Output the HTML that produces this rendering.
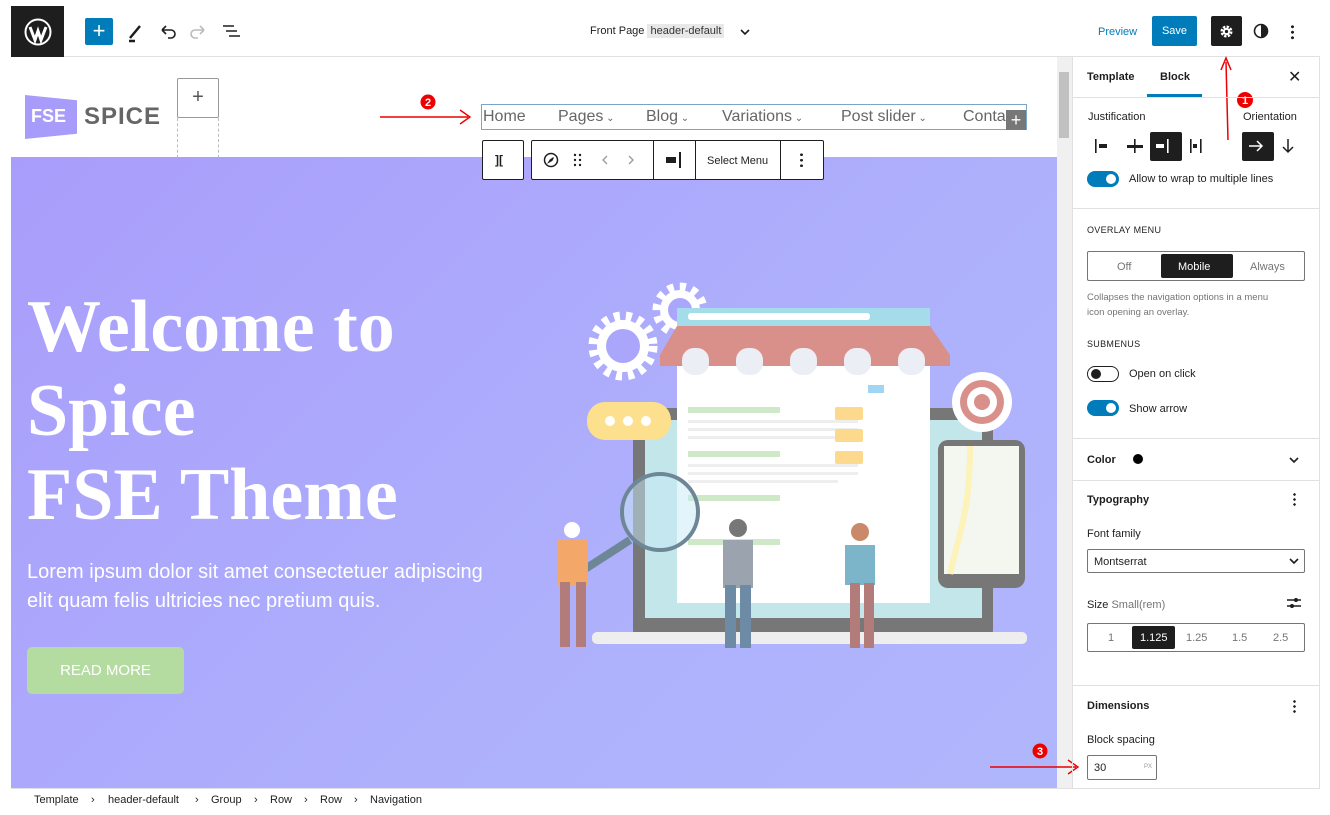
<!DOCTYPE html>
<html><head><meta charset="utf-8"><style>
*{box-sizing:border-box;margin:0;padding:0}
body{width:1330px;height:815px;background:#fff;font-family:"Liberation Sans",sans-serif;position:relative;overflow:hidden;color:#1e1e1e}
.a{position:absolute}
.t{font-size:11px}
.bx{border:1px solid #1e1e1e;border-radius:2px}
.sec{border-top:1px solid #e0e0e0;left:1073px;width:247px}
.lbl{font-size:11px;color:#1e1e1e}
.sm{font-size:9px;color:#1e1e1e;letter-spacing:.3px}
.tog{width:32px;height:16px;border-radius:8px;background:#007cba}
.tog:after{content:"";position:absolute;right:3px;top:3px;width:10px;height:10px;border-radius:5px;background:#fff}
.togo{width:32px;height:16px;border-radius:8px;border:1px solid #1e1e1e;background:#fff}
.togo:after{content:"";position:absolute;left:3px;top:2px;width:10px;height:10px;border-radius:5px;background:#1e1e1e}
.nv{position:absolute;top:3px;font-size:16px;color:#666;white-space:nowrap}
.nv small{font-size:10px}
.bc{position:absolute;top:794px;font-size:11px;color:#1e1e1e}
</style></head><body>
<!-- top bar -->
<div class="a" style="left:11px;top:6px;width:1309px;height:51px;border-bottom:1px solid #e0e0e0"></div>
<div class="a" style="left:11px;top:6px;width:53px;height:51px;background:#1e1e1e"></div>
<svg class="a" style="left:24px;top:18px" width="28" height="28" viewBox="0 0 28 28"><circle cx="14" cy="14" r="12.5" fill="none" stroke="#fff" stroke-width="2"/><path d="M6 9 L11 22 L14 13 L17 22 L22 9" fill="none" stroke="#fff" stroke-width="3"/></svg>
<div class="a" style="left:85px;top:18px;width:28px;height:27px;background:#007cba;border-radius:2px;color:#fff;font-size:22px;text-align:center;line-height:26px">+</div>
<svg class="a" style="left:126px;top:20px" width="120" height="24" viewBox="0 0 120 24"><path d="M4 18 L14 6 M3 21 H9" stroke="#1e1e1e" stroke-width="2.5"/><path d="M36 10 H45 a4 4 0 0 1 0 8 H42 M36 10 l4 -4 M36 10 l4 4" stroke="#1e1e1e" stroke-width="1.6" fill="none"/><path d="M78 10 H69 a4 4 0 0 0 0 8 H72 M78 10 l-4 -4 M78 10 l-4 4" stroke="#bbb" stroke-width="1.6" fill="none"/><path d="M97 6 H108 M100 11 H111 M103 16 H114" stroke="#1e1e1e" stroke-width="1.6"/></svg>
<div class="a t" style="left:590px;top:25px">Front Page <span style="background:#e8e8e8;padding:1px 3px;color:#333">header-default</span></div>
<svg class="a" style="left:739px;top:27px" width="12" height="10"><path d="M2 3 L6 7 L10 3" stroke="#1e1e1e" stroke-width="1.6" fill="none"/></svg>
<div class="a t" style="left:1098px;top:26px;color:#007cba">Preview</div>
<div class="a" style="left:1152px;top:16px;width:45px;height:30px;background:#007cba;border-radius:2px;color:#fff;font-size:11px;text-align:center;line-height:30px">Save</div>
<div class="a" style="left:1211px;top:16px;width:31px;height:30px;background:#1e1e1e;border-radius:2px"></div>
<svg class="a" style="left:1218px;top:23px" width="17" height="17" viewBox="0 0 24 24"><circle cx="12" cy="12" r="6" fill="none" stroke="#fff" stroke-width="5" stroke-dasharray="3 1.7"/><circle cx="12" cy="12" r="5" fill="#fff"/><circle cx="12" cy="12" r="2.3" fill="#1e1e1e"/></svg>
<svg class="a" style="left:1253px;top:23px" width="16" height="16"><circle cx="8" cy="8" r="6.5" fill="none" stroke="#1e1e1e" stroke-width="1.6"/><path d="M8 1.5 A6.5 6.5 0 0 1 8 14.5Z" fill="#1e1e1e"/></svg>
<div class="a" style="left:1291px;top:24px;width:3px;height:16px;background:radial-gradient(circle,#1e1e1e 1.4px,transparent 1.6px) 0 0/3px 5.5px"></div>
<svg class="a" style="left:1218px;top:50px" width="40" height="110"><path d="M10 90 L8 12 M3 20 L8 8 L13 20" stroke="#e00" stroke-width="1.5" fill="none"/><circle cx="27" cy="50" r="8" fill="#e00"/><text x="27" y="54" fill="#fff" font-size="11" font-weight="bold" text-anchor="middle" font-family="Liberation Sans">1</text></svg>

<!-- canvas header -->
<div class="a" style="left:25px;top:95px;width:52px;height:44px;background:#a89cfb;clip-path:polygon(0 0,100% 12%,100% 88%,0 100%)"></div>
<div class="a" style="left:31px;top:106px;color:#fff;font-weight:bold;font-size:18px">FSE</div>
<div class="a" style="left:84px;top:103px;color:#666;font-size:24px;letter-spacing:1px;font-weight:bold">SPICE</div>
<div class="a" style="left:177px;top:78px;width:42px;height:40px;border:1px solid #999;border-radius:2px;background:#fff;text-align:center;line-height:36px;font-size:20px;color:#555">+</div>
<div class="a" style="left:177px;top:118px;width:42px;height:40px;border:1px dashed #bbb;border-top:none"></div>
<svg class="a" style="left:380px;top:92px" width="100" height="36"><path d="M0 25 H88 M80 18 L90 25 L80 32" stroke="#e00" stroke-width="1.4" fill="none"/><circle cx="48" cy="10" r="7.5" fill="#e00"/><text x="48" y="14" fill="#fff" font-size="11" font-weight="bold" text-anchor="middle" font-family="Liberation Sans">2</text></svg>
<div class="a" style="left:481px;top:104px;width:546px;height:26px;border:1px solid #7aa5c9;overflow:hidden">
<span class="nv" style="left:1px">Home</span>
<span class="nv" style="left:76px">Pages<small> ⌄</small></span>
<span class="nv" style="left:164px">Blog<small> ⌄</small></span>
<span class="nv" style="left:240px">Variations<small> ⌄</small></span>
<span class="nv" style="left:359px">Post slider<small> ⌄</small></span>
<span class="nv" style="left:481px">Contact</span>
</div>
<div class="a" style="left:1006px;top:110px;width:20px;height:20px;background:#777;color:#fff;text-align:center;line-height:20px;font-size:18px">+</div>

<!-- hero -->
<div class="a" style="left:11px;top:157px;width:1046px;height:632px;background:linear-gradient(135deg,#a99dfb,#aeb0fc 60%,#b0b6fc)"></div>
<div class="a bx" style="left:482px;top:140px;width:42px;height:40px;background:#fff"></div>
<div class="a" style="left:495px;top:153px;font-size:12px;font-weight:bold">]⁠[</div>
<div class="a bx" style="left:531px;top:140px;width:293px;height:40px;background:#fff"></div>
<div class="a" style="left:653px;top:140px;width:1px;height:40px;background:#1e1e1e"></div>
<div class="a" style="left:695px;top:140px;width:1px;height:40px;background:#1e1e1e"></div>
<div class="a" style="left:780px;top:140px;width:1px;height:40px;background:#1e1e1e"></div>
<svg class="a" style="left:541px;top:151px" width="100" height="18"><circle cx="10" cy="9" r="6.5" fill="none" stroke="#1e1e1e" stroke-width="1.5"/><path d="M12.5 6.5 L9 9 L7.5 11.5 L11 9.5Z" fill="#1e1e1e" stroke="#1e1e1e"/><g fill="#1e1e1e"><circle cx="34" cy="4" r="1.2"/><circle cx="39" cy="4" r="1.2"/><circle cx="34" cy="9" r="1.2"/><circle cx="39" cy="9" r="1.2"/><circle cx="34" cy="14" r="1.2"/><circle cx="39" cy="14" r="1.2"/></g><path d="M66 5 L62 9 L66 13 M88 5 L92 9 L88 13" stroke="#999" stroke-width="1.3" fill="none"/></svg>
<div class="a" style="left:666px;top:157px;width:10px;height:6px;background:#1e1e1e"></div>
<div class="a" style="left:679px;top:152px;width:2px;height:16px;background:#1e1e1e"></div>
<div class="a" style="left:707px;top:155px;font-size:11px">Select Menu</div>
<div class="a" style="left:800px;top:152px;width:3px;height:16px;background:radial-gradient(circle,#1e1e1e 1.3px,transparent 1.5px) 0 0/3px 5.5px"></div>

<div class="a" style="left:27px;top:285px;color:#fff;font-family:'Liberation Serif',serif;font-weight:bold;font-size:74px;line-height:84px;white-space:nowrap">Welcome to<br>Spice<br>FSE Theme</div>
<div class="a" style="left:27px;top:558px;color:#fff;font-size:20px;line-height:29px;white-space:nowrap">Lorem ipsum dolor sit amet consectetuer adipiscing<br>elit quam felis ultricies nec pretium quis.</div>
<div class="a" style="left:27px;top:647px;width:157px;height:47px;background:#b5dca0;border-radius:5px;color:#fff;font-size:15px;text-align:center;line-height:47px">READ MORE</div>

<!-- illustration -->
<svg class="a" style="left:530px;top:270px" width="530" height="400" viewBox="0 0 530 400">
<g fill="#fff"><circle cx="93" cy="76" r="26"/><circle cx="150" cy="40" r="20"/></g>
<g stroke="#fff" stroke-width="9" stroke-dasharray="6 6"><circle cx="93" cy="76" r="30" fill="none"/><circle cx="150" cy="40" r="23" fill="none"/></g>
<g fill="#aaa6fb"><circle cx="93" cy="76" r="17"/><circle cx="150" cy="40" r="12"/></g>
<rect x="103" y="138" width="360" height="230" rx="8" fill="#777"/>
<rect x="115" y="150" width="337" height="198" fill="#c2e6ea"/>
<rect x="62" y="362" width="435" height="12" rx="5" fill="#eee"/>
<rect x="147" y="38" width="253" height="295" fill="#fff"/>
<rect x="147" y="38" width="253" height="18" fill="#a5dcea"/>
<rect x="158" y="43" width="182" height="7" rx="3" fill="#fff"/>
<path d="M130 85 L147 56 H400 L420 85 V96 H130Z" fill="#d9908a"/>
<g fill="#eceef6"><rect x="152" y="78" width="27" height="27" rx="12"/><rect x="206" y="78" width="27" height="27" rx="12"/><rect x="260" y="78" width="27" height="27" rx="12"/><rect x="314" y="78" width="27" height="27" rx="12"/><rect x="368" y="78" width="27" height="27" rx="12"/></g>
<g fill="#cfe8c8"><rect x="158" y="137" width="92" height="6"/><rect x="158" y="181" width="92" height="6"/><rect x="158" y="225" width="92" height="6"/><rect x="158" y="269" width="92" height="6"/></g>
<g fill="#eee"><rect x="158" y="150" width="170" height="3"/><rect x="158" y="158" width="170" height="3"/><rect x="158" y="166" width="150" height="3"/><rect x="158" y="194" width="170" height="3"/><rect x="158" y="202" width="170" height="3"/><rect x="158" y="210" width="150" height="3"/></g>
<g fill="#fcd98c"><rect x="305" y="137" width="28" height="13" rx="2"/><rect x="305" y="159" width="28" height="13" rx="2"/><rect x="305" y="181" width="28" height="13" rx="2"/></g>
<rect x="338" y="115" width="16" height="8" fill="#9fd7f2"/>
<rect x="57" y="132" width="84" height="38" rx="18" fill="#fce08e"/>
<g fill="#fff"><circle cx="80" cy="151" r="5"/><circle cx="98" cy="151" r="5"/><circle cx="116" cy="151" r="5"/></g>
<circle cx="130" cy="242" r="38" fill="#c8e9f6" fill-opacity=".5" stroke="#6e8797" stroke-width="4"/>
<path d="M100 270 L35 312" stroke="#6e8797" stroke-width="8"/>
<rect x="408" y="170" width="87" height="148" rx="10" fill="#777"/>
<rect x="414" y="176" width="75" height="128" fill="#f4f6f0"/>
<path d="M440 176 C440 240 430 260 420 304" stroke="#fdf2b8" stroke-width="6" fill="none"/>
<circle cx="452" cy="132" r="30" fill="#fff"/><circle cx="452" cy="132" r="22" fill="#d9908a"/><circle cx="452" cy="132" r="15" fill="#fff"/><circle cx="452" cy="132" r="8" fill="#d9908a"/>
<g fill="#f3a86a"><rect x="28" y="270" width="30" height="45"/></g><g fill="#b27c7a"><rect x="30" y="312" width="10" height="65"/><rect x="46" y="312" width="10" height="65"/></g>
<circle cx="42" cy="260" r="8" fill="#fff"/>
<g fill="#9aa3ae"><rect x="193" y="270" width="30" height="48"/></g><g fill="#6e8ba5"><rect x="195" y="315" width="11" height="63"/><rect x="210" y="315" width="11" height="63"/></g>
<circle cx="208" cy="258" r="9" fill="#777"/>
<g fill="#7cb5c9"><rect x="315" y="275" width="30" height="40"/></g><g fill="#b27c7a"><rect x="320" y="313" width="10" height="65"/><rect x="334" y="313" width="10" height="65"/></g>
<circle cx="330" cy="262" r="9" fill="#c98a6a"/>
</svg>

<!-- scrollbar -->
<div class="a" style="left:1057px;top:57px;width:16px;height:732px;background:#f0f0f0"></div>
<div class="a" style="left:1059px;top:72px;width:10px;height:66px;background:#c1c1c1"></div>
<div class="a" style="left:11px;top:788px;width:1309px;height:1px;background:#e0e0e0"></div>
<svg class="a" style="left:990px;top:742px" width="90" height="40"><path d="M0 25 H86 M78 18 L88 25 L78 32" stroke="#e00" stroke-width="1.4" fill="none"/><circle cx="50" cy="9" r="7.5" fill="#e00"/><text x="50" y="13" fill="#fff" font-size="11" font-weight="bold" text-anchor="middle" font-family="Liberation Sans">3</text></svg>

<!-- sidebar -->
<div class="a" style="left:1072px;top:57px;width:1px;height:732px;background:#e0e0e0"></div>
<div class="a" style="left:1319px;top:57px;width:1px;height:732px;background:#e0e0e0"></div>
<div class="a" style="left:1087px;top:71px;font-size:11px;font-weight:bold">Template</div>
<div class="a" style="left:1160px;top:71px;font-size:11px;font-weight:bold">Block</div>
<div class="a" style="left:1147px;top:94px;width:55px;height:3px;background:#007cba"></div>
<div class="a" style="left:1288px;top:67px;font-size:16px">✕</div>
<div class="a sec" style="top:97px"></div>
<div class="a lbl" style="left:1088px;top:111px">Justification</div>
<div class="a lbl" style="left:1243px;top:111px">Orientation</div>
<div class="a" style="left:1150px;top:132px;width:32px;height:29px;background:#1e1e1e;border-radius:2px"></div>
<div class="a" style="left:1242px;top:132px;width:32px;height:29px;background:#1e1e1e;border-radius:2px"></div>
<svg class="a" style="left:1090px;top:136px" width="220" height="20"><g fill="#1e1e1e"><rect x="5" y="3" width="1.6" height="14"/><rect x="9" y="8" width="8" height="4"/><rect x="37" y="9" width="16" height="3"/><rect x="44" y="3" width="1.6" height="14"/><rect x="66" y="8" width="8" height="4" fill="#fff"/><rect x="77" y="3" width="1.6" height="14" fill="#fff"/><rect x="100" y="3" width="1.6" height="14"/><rect x="103" y="8" width="4" height="4"/><rect x="110" y="3" width="1.6" height="14"/></g><path d="M159 10 H172 M167 5 L172 10 L167 15" stroke="#fff" stroke-width="1.5" fill="none"/><path d="M198 3 V16 M193 11 L198 16 L203 11" stroke="#1e1e1e" stroke-width="1.5" fill="none"/></svg>
<div class="a tog" style="left:1087px;top:171px"></div>
<div class="a lbl" style="left:1129px;top:173px">Allow to wrap to multiple lines</div>
<div class="a sec" style="top:208px"></div>
<div class="a sm" style="left:1087px;top:225px">OVERLAY MENU</div>
<div class="a" style="left:1087px;top:251px;width:218px;height:30px;border:1px solid #757575;border-radius:2px"></div>
<div class="a" style="left:1161px;top:254px;width:72px;height:24px;background:#1e1e1e;border-radius:2px"></div>
<div class="a lbl" style="left:1117px;top:261px;color:#757575">Off</div>
<div class="a lbl" style="left:1178px;top:261px;color:#fff">Mobile</div>
<div class="a lbl" style="left:1250px;top:261px;color:#757575">Always</div>
<div class="a" style="left:1087px;top:290px;font-size:9.5px;color:#757575;line-height:15px">Collapses the navigation options in a menu<br>icon opening an overlay.</div>
<div class="a sm" style="left:1087px;top:339px">SUBMENUS</div>
<div class="a togo" style="left:1087px;top:366px"></div>
<div class="a lbl" style="left:1129px;top:368px">Open on click</div>
<div class="a tog" style="left:1087px;top:400px"></div>
<div class="a lbl" style="left:1129px;top:403px">Show arrow</div>
<div class="a sec" style="top:438px"></div>
<div class="a lbl" style="left:1087px;top:454px;font-weight:bold">Color</div>
<div class="a" style="left:1133px;top:454px;width:10px;height:10px;border-radius:5px;background:#000"></div>
<svg class="a" style="left:1288px;top:455px" width="12" height="10"><path d="M2 3 L6 7 L10 3" stroke="#1e1e1e" stroke-width="1.6" fill="none"/></svg>
<div class="a sec" style="top:480px"></div>
<div class="a lbl" style="left:1087px;top:494px;font-weight:bold">Typography</div>
<div class="a" style="left:1293px;top:492px;width:3px;height:14px;background:radial-gradient(circle,#1e1e1e 1.2px,transparent 1.4px) 0 0/3px 5px"></div>
<div class="a lbl" style="left:1087px;top:528px">Font family</div>
<div class="a" style="left:1087px;top:549px;width:218px;height:24px;border:1px solid #757575;border-radius:2px"></div>
<div class="a lbl" style="left:1094px;top:556px">Montserrat</div>
<svg class="a" style="left:1288px;top:556px" width="12" height="10"><path d="M2 3 L6 7 L10 3" stroke="#1e1e1e" stroke-width="1.6" fill="none"/></svg>
<div class="a lbl" style="left:1087px;top:599px">Size <span style="color:#757575">Small(rem)</span></div>
<svg class="a" style="left:1286px;top:596px" width="16" height="14"><path d="M1 4 H15 M1 10 H15" stroke="#1e1e1e" stroke-width="1.4"/><circle cx="10" cy="4" r="2" fill="#1e1e1e"/><circle cx="6" cy="10" r="2" fill="#1e1e1e"/></svg>
<div class="a" style="left:1087px;top:623px;width:218px;height:29px;border:1px solid #757575;border-radius:2px"></div>
<div class="a" style="left:1132px;top:626px;width:43px;height:23px;background:#1e1e1e;border-radius:2px"></div>
<div class="a lbl" style="left:1108px;top:632px;color:#757575">1</div>
<div class="a lbl" style="left:1140px;top:632px;color:#fff">1.125</div>
<div class="a lbl" style="left:1186px;top:632px;color:#757575">1.25</div>
<div class="a lbl" style="left:1232px;top:632px;color:#757575">1.5</div>
<div class="a lbl" style="left:1273px;top:632px;color:#757575">2.5</div>
<div class="a sec" style="top:685px"></div>
<div class="a lbl" style="left:1087px;top:700px;font-weight:bold">Dimensions</div>
<div class="a" style="left:1293px;top:699px;width:3px;height:14px;background:radial-gradient(circle,#1e1e1e 1.2px,transparent 1.4px) 0 0/3px 5px"></div>
<div class="a lbl" style="left:1087px;top:734px">Block spacing</div>
<div class="a" style="left:1087px;top:755px;width:70px;height:25px;border:1px solid #757575;border-radius:2px"></div>
<div class="a lbl" style="left:1094px;top:762px">30</div>
<div class="a" style="left:1144px;top:764px;font-size:6px;color:#999">PX</div>

<!-- breadcrumb -->
<span class="bc" style="left:34px">Template</span><span class="bc" style="left:91px">›</span>
<span class="bc" style="left:108px">header-default</span><span class="bc" style="left:195px">›</span>
<span class="bc" style="left:211px">Group</span><span class="bc" style="left:254px">›</span>
<span class="bc" style="left:270px">Row</span><span class="bc" style="left:304px">›</span>
<span class="bc" style="left:320px">Row</span><span class="bc" style="left:354px">›</span>
<span class="bc" style="left:370px">Navigation</span>
</body></html>
